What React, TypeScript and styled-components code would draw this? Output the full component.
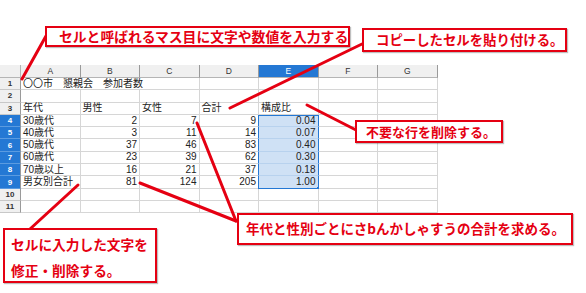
import React from "react";
import styled, { createGlobalStyle } from "styled-components";

const RED = "#e50012";
const BLUE = "#2478d4";
const COLS = ["A", "B", "C", "D", "E", "F", "G"];

type Val = string | number;

// 表のデータ（1行目は結合して表示）
const rows: Val[][] = [
  [],
  [],
  ["年代", "男性", "女性", "合計", "構成比"],
  ["30歳代", 2, 7, 9, "0.04"],
  ["40歳代", 3, 11, 14, "0.07"],
  ["50歳代", 37, 46, 83, "0.40"],
  ["60歳代", 23, 39, 62, "0.30"],
  ["70歳以上", 16, 21, 37, "0.18"],
  ["男女別合計", 81, 124, 205, "1.00"],
  [],
  [],
];

const callouts = [
  { key: "c1", x: 45, y: 26, w: 305, h: 21, size: 13.8, pad: 12, lines: ["セルと呼ばれるマス目に文字や数値を入力する"] },
  { key: "c2", x: 362, y: 28, w: 205, h: 24, size: 13.4, pad: 12, lines: ["コピーしたセルを貼り付ける。"] },
  { key: "c3", x: 355, y: 120, w: 148, h: 23, size: 13, pad: 9, lines: ["不要な行を削除する。"] },
  { key: "c4", x: 237, y: 213, w: 336, h: 32, size: 13.5, pad: 7, lines: ["年代と性別ごとにさbんかしゃすうの合計を求める。"] },
  { key: "c5", x: 3, y: 228, w: 154, h: 55, size: 13.7, pad: 6, lines: ["セルに入力した文字を", "修正・削除する。"] },
];

const leaders = [
  [46, 36, 22, 79],
  [362, 44, 230, 108],
  [356, 130, 307, 105],
  [236, 221, 140, 183],
  [236, 221, 197, 123],
  [30, 229, 78, 185],
];

function App() {
  return (
    <Page>
      <GlobalStyle />
      <Sheet>
        <Corner />
        {COLS.map((c) => (
          <ColHead key={c} $active={c === "E"}>
            {c}
          </ColHead>
        ))}
        {rows.map((r, ri) => {
          const n = ri + 1;
          const active = n >= 4 && n <= 9;
          return (
            <React.Fragment key={n}>
              <RowHead $active={active}>{n}</RowHead>
              {n === 1 ? (
                <>
                  <Cell $span={3}>〇〇市　懇親会　参加者数</Cell>
                  {[3, 4, 5, 6].map((ci) => (
                    <Cell key={ci} />
                  ))}
                </>
              ) : (
                COLS.map((c, ci) => {
                  const v = r[ci];
                  const sel = ci === 4 && active;
                  return (
                    <Cell
                      key={c}
                      $num={typeof v === "number" || sel}
                      $sel={sel}
                      $first={sel && n === 4}
                      $last={sel && n === 9}
                    >
                      {v ?? ""}
                      {sel && n === 9 && <Handle />}
                    </Cell>
                  );
                })
              )}
            </React.Fragment>
          );
        })}
      </Sheet>

      <Leaders width="586" height="293" viewBox="0 0 586 293">
        {leaders.map(([x1, y1, x2, y2], i) => (
          <line key={i} x1={x1} y1={y1} x2={x2} y2={y2} stroke={RED} strokeWidth="3" strokeLinecap="round" />
        ))}
      </Leaders>

      {callouts.map((c) => (
        <Callout
          key={c.key}
          $size={c.size}
          $pad={c.pad}
          $multi={c.lines.length > 1}
          style={{ left: c.x, top: c.y, width: c.w, height: c.h }}
        >
          {c.lines.map((l) => (
            <div key={l}>{l}</div>
          ))}
        </Callout>
      ))}
    </Page>
  );
}

export default App;

const GlobalStyle = createGlobalStyle`
  body {
    margin: 0;
    background: #fff;
  }
  * {
    box-sizing: border-box;
  }
`;

const Page = styled.div`
  position: relative;
  width: 586px;
  height: 293px;
  overflow: hidden;
  background: #fff;
  padding-top: 65px;
  font-family: "Liberation Sans", "Noto Sans CJK JP", sans-serif;
`;

const Sheet = styled.div`
  display: grid;
  grid-template-columns: 21px repeat(7, 59.5px);
  grid-template-rows: 13px repeat(11, 12.3px);
  width: max-content;
  font-size: 10px;
  color: #222;
`;

const Corner = styled.div`
  background: #f0f0f0;
  border-right: 1px solid #b5b5b5;
  border-bottom: 1px solid #b5b5b5;
`;

const ColHead = styled.div<{ $active?: boolean }>`
  display: flex;
  align-items: center;
  justify-content: center;
  font-size: 8.5px;
  background: ${(p) => (p.$active ? BLUE : "#f0f0f0")};
  color: ${(p) => (p.$active ? "#fff" : "#333")};
  border-right: 1px solid #9a9a9a;
  border-bottom: 1px solid #b5b5b5;
`;

const RowHead = styled.div<{ $active?: boolean }>`
  display: flex;
  align-items: center;
  justify-content: center;
  font-size: 8px;
  font-weight: bold;
  background: ${(p) => (p.$active ? BLUE : "#f0f0f0")};
  color: ${(p) => (p.$active ? "#fff" : "#333")};
  border-right: 1px solid #9a9a9a;
  border-bottom: 1px solid ${(p) => (p.$active ? "#5b9be0" : "#c8c8c8")};
`;

const Cell = styled.div<{
  $span?: number;
  $num?: boolean;
  $sel?: boolean;
  $first?: boolean;
  $last?: boolean;
}>`
  position: relative;
  grid-column: span ${(p) => p.$span ?? 1};
  display: flex;
  align-items: center;
  justify-content: ${(p) => (p.$num ? "flex-end" : "flex-start")};
  padding: 0 2px;
  white-space: nowrap;
  line-height: 1;
  background: ${(p) => (p.$sel ? "#cfe1f5" : "#fff")};
  border-right: 1px solid ${(p) => (p.$sel ? BLUE : "#d6d6d6")};
  border-bottom: 1px solid ${(p) => (p.$last ? BLUE : p.$sel ? "#b8d2ee" : "#d6d6d6")};
  border-left: ${(p) => (p.$sel ? `1px solid ${BLUE}` : "none")};
  border-top: ${(p) => (p.$first ? `1px solid ${BLUE}` : "none")};
  margin-left: ${(p) => (p.$sel ? "-1px" : "0")};
`;

const Handle = styled.span`
  position: absolute;
  right: -3px;
  bottom: -3px;
  width: 4px;
  height: 4px;
  background: ${BLUE};
`;

const Leaders = styled.svg`
  position: absolute;
  left: 0;
  top: 0;
  pointer-events: none;
`;

const Callout = styled.div<{ $size: number; $pad: number; $multi?: boolean }>`
  position: absolute;
  display: flex;
  flex-direction: column;
  justify-content: ${(p) => (p.$multi ? "flex-start" : "center")};
  padding: ${(p) => (p.$multi ? `1px 0 0 ${p.$pad}px` : `0 0 0 ${p.$pad}px`)};
  background: #fff;
  border: 2.5px solid ${RED};
  box-shadow: 1px 1px 1px rgba(0, 0, 0, 0.25);
  color: ${RED};
  font-family: "Noto Sans CJK JP", sans-serif;
  font-weight: bold;
  font-size: ${(p) => p.$size}px;
  line-height: ${(p) => (p.$multi ? "26px" : "1")};
  white-space: nowrap;
`;
